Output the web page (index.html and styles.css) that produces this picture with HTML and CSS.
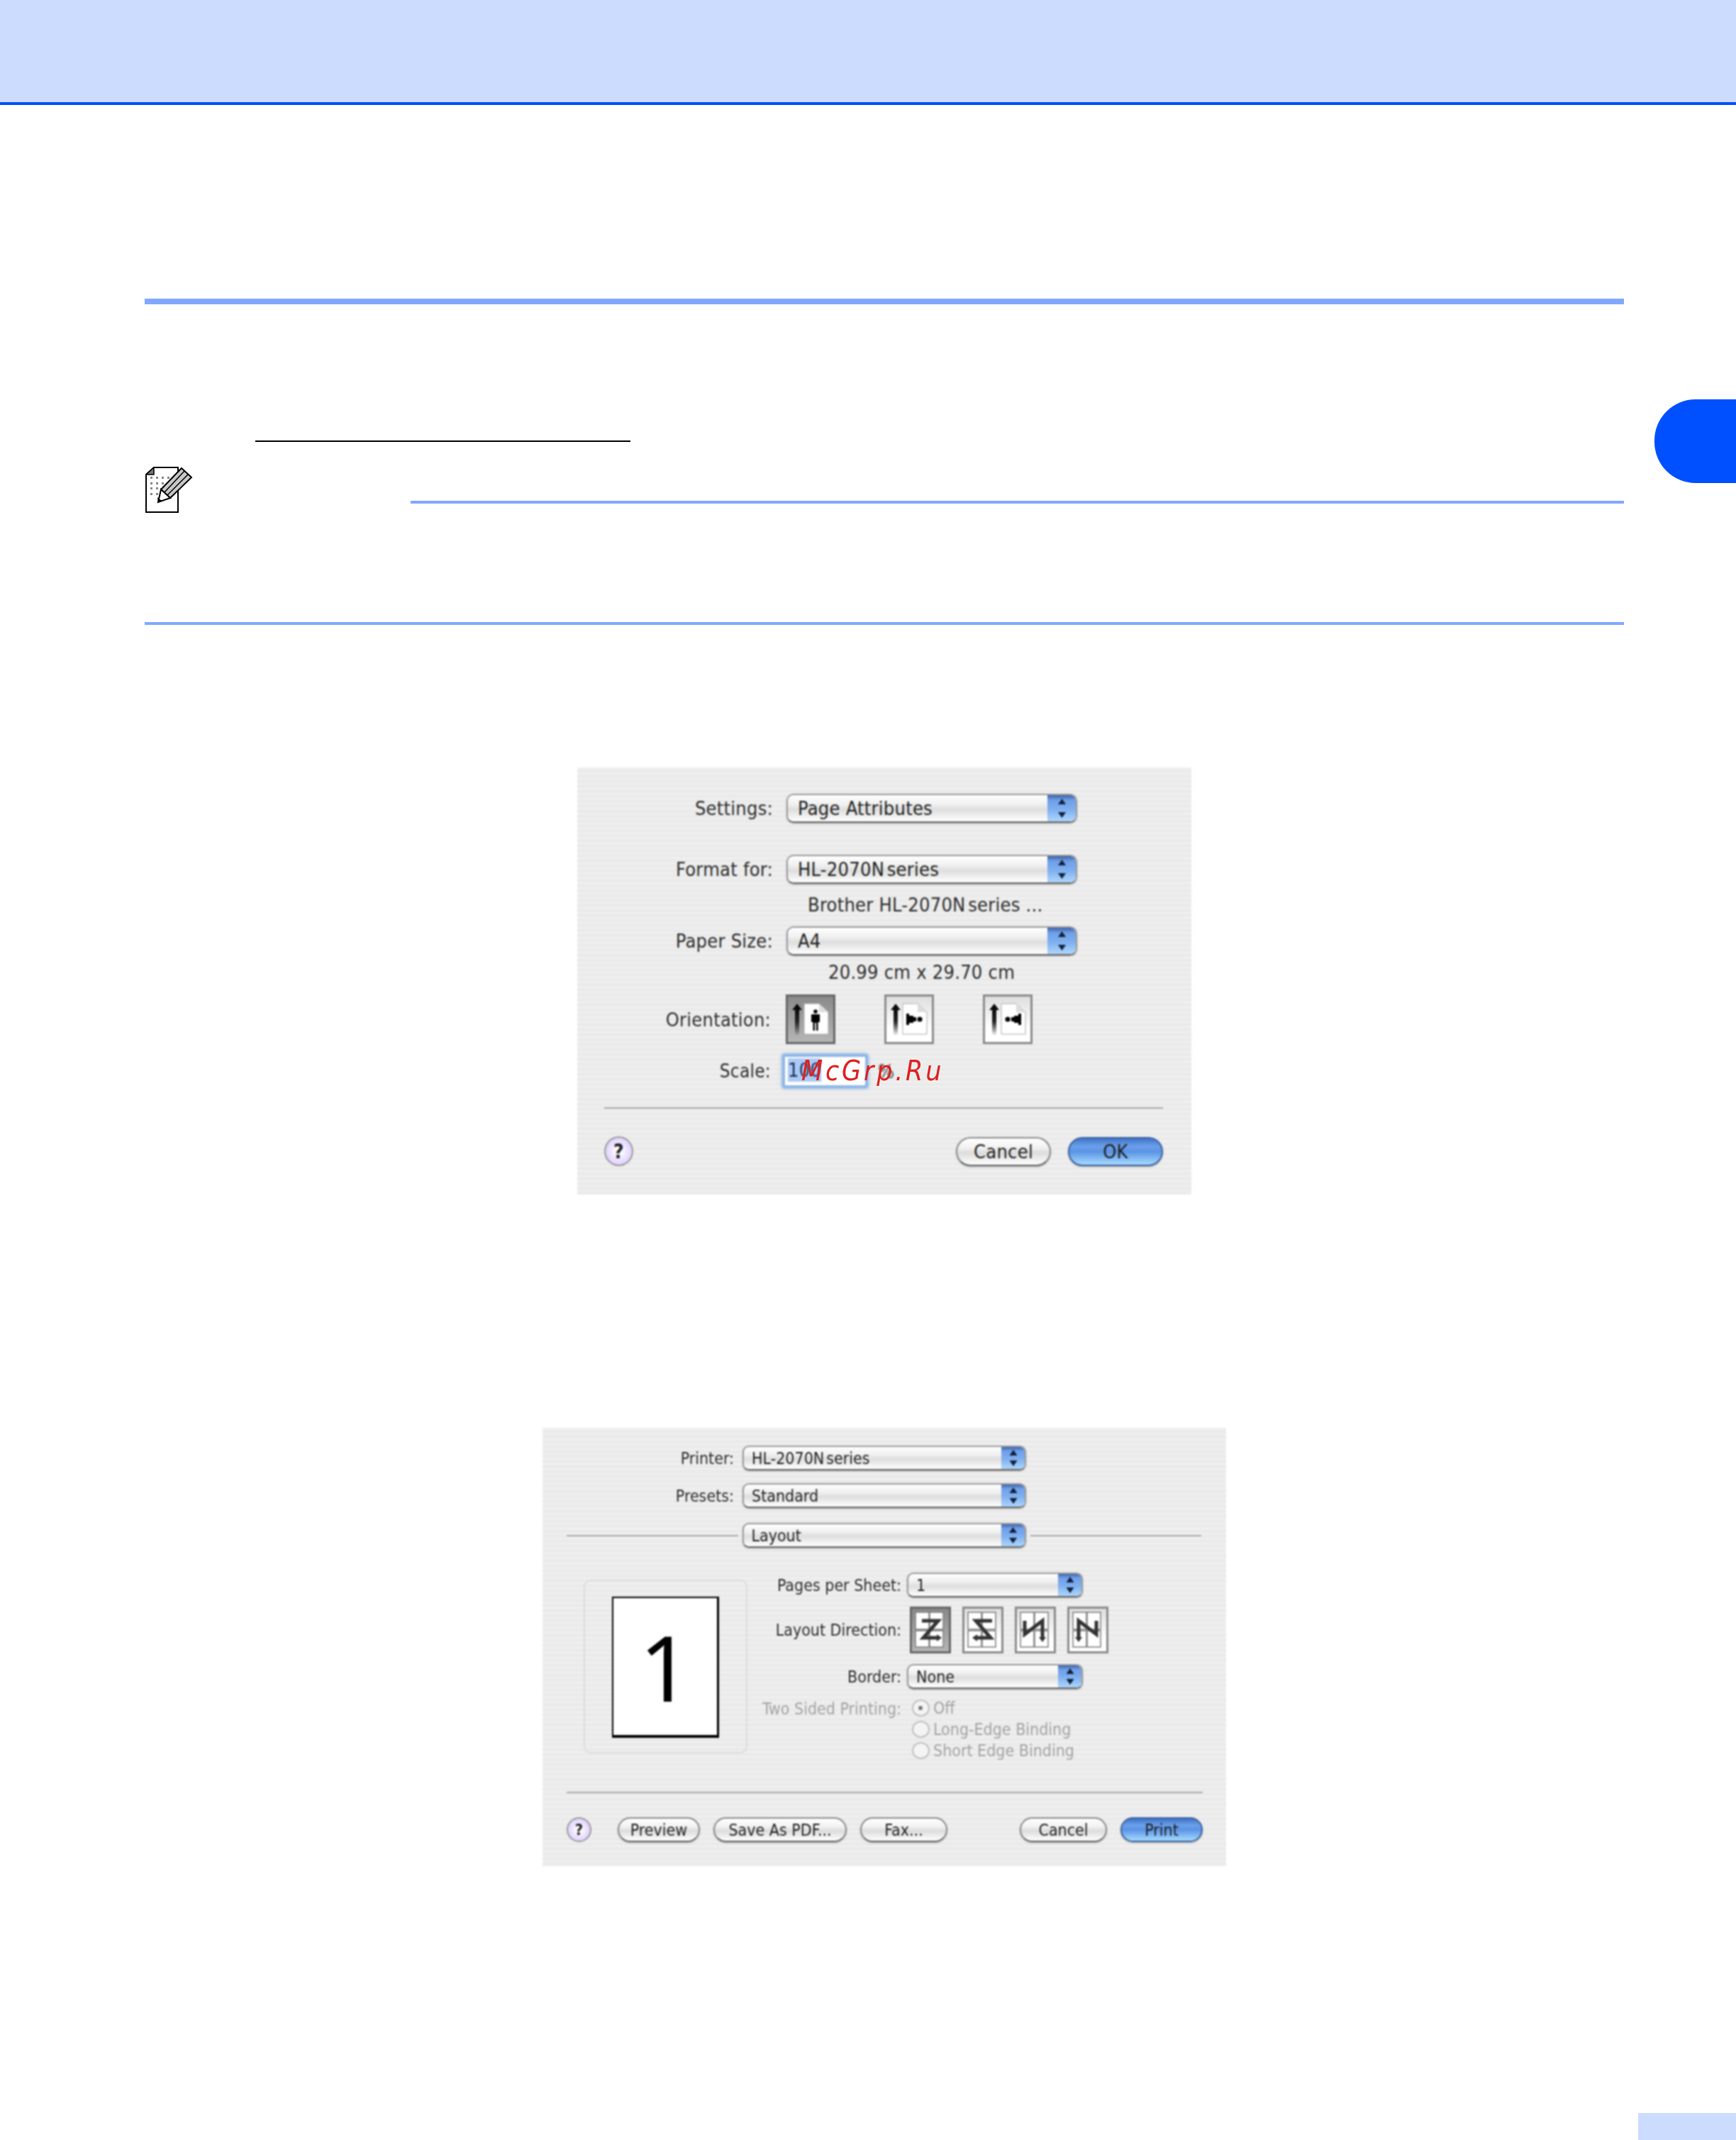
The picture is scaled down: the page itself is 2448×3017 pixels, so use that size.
FILE: index.html
```html
<!DOCTYPE html>
<html lang="en">
<head>
<meta charset="utf-8">
<title>Page Setup and Print dialogs</title>
<link rel="stylesheet" href="styles.css">
</head>
<body>
<div class="page">
  <header class="topbar"></header>
  <div class="tab"></div>
  <main class="content">
    <div class="rule"></div>
    <div class="link-line"></div>
    <div class="note">
      <svg class="note-icon" viewBox="0 0 68 66" width="68" height="66">
        <path d="M12 1H46V64H1V11Z" fill="#fff" stroke="#000" stroke-width="2"/>
        <path d="M1 11L12 1V11Z" fill="#777" stroke="#000" stroke-width="1.5"/>
        <g fill="#888">
          <rect x="7" y="14" width="3" height="3"/><rect x="15" y="14" width="3" height="3"/><rect x="23" y="14" width="3" height="3"/><rect x="31" y="14" width="3" height="3"/>
          <rect x="7" y="22" width="3" height="3"/><rect x="15" y="22" width="3" height="3"/><rect x="23" y="22" width="3" height="3"/>
          <rect x="7" y="29" width="3" height="3"/><rect x="15" y="29" width="3" height="3"/>
          <rect x="7" y="37" width="3" height="3"/><rect x="15" y="37" width="3" height="3"/>
        </g>
        <path d="M51 2L65 15L35 44L22 32Z" fill="#c8c8c8" stroke="#000" stroke-width="2"/>
        <path d="M22 32L35 44L18 50Z" fill="#fff" stroke="#000" stroke-width="2"/>
        <path d="M18 50L17 43L23 48Z" fill="#000"/>
        <path d="M55 6L27 36M60 11L31 40" stroke="#000" stroke-width="1.5" fill="none"/>
      </svg>
      <div class="note-line"></div>
    </div>
    <div class="note-end"></div>

    <section class="dialog dialog-one">
      <div class="shot">
        <div class="row row-settings"><span class="label">Settings:</span><div class="popup"><span>Page Attributes</span><i class="caps"></i></div></div>
        <div class="row row-format"><span class="label">Format for:</span><div class="popup"><span class="tight">HL-2070N series</span><i class="caps"></i></div></div>
        <div class="hint hint-printer">Brother <span class="tight">HL-2070N series</span> ...</div>
        <div class="row row-paper"><span class="label">Paper Size:</span><div class="popup"><span>A4</span><i class="caps"></i></div></div>
        <div class="hint hint-size">20.99 cm x 29.70 cm</div>
        <div class="row row-orient"><span class="label">Orientation:</span>
          <div class="orient-set">
            <div class="toggle toggle-large on">
              <svg viewBox="0 0 70 70" width="70" height="70"><use href="#arrow"/><use href="#sheet"/><g transform="translate(42 29)"><circle cx="0" cy="-5" r="2.8"/><path d="M-6 -1H6V10H3.5V22H1V11H-1V22H-3.5V10H-6Z"/></g></svg>
            </div>
            <div class="toggle toggle-large">
              <svg viewBox="0 0 70 70" width="70" height="70"><use href="#arrow"/><use href="#sheet"/><g transform="translate(31 35)"><path d="M0 -8H4V-5H10V-3H14V3H10V5H4V8H0Z"/><circle cx="19" cy="0" r="3.6"/></g></svg>
            </div>
            <div class="toggle toggle-large">
              <svg viewBox="0 0 70 70" width="70" height="70"><use href="#arrow"/><use href="#sheet"/><g transform="translate(54 35)"><path d="M0 -8H-4V-5H-10V-3H-14V3H-10V5H-4V8H0Z"/><circle cx="-19" cy="0" r="3.6"/></g></svg>
            </div>
          </div>
        </div>
        <div class="row row-scale"><span class="label">Scale:</span>
          <div class="field"><span class="selected">100</span></div><span class="percent">%</span>
        </div>
        <div class="sep sep-one"></div>
        <div class="actions actions-one">
          <div class="help help-large">?</div>
          <div class="btn btn-cancel-one">Cancel</div>
          <div class="btn primary btn-ok">OK</div>
        </div>
      </div>
      <div class="watermark">McGrp.Ru</div>
    </section>

    <section class="dialog dialog-two">
      <div class="shot">
        <div class="row2 row-printer"><span class="label2">Printer:</span><div class="popup popup-small"><span class="tight">HL-2070N series</span><i class="caps"></i></div></div>
        <div class="row2 row-presets"><span class="label2">Presets:</span><div class="popup popup-small"><span>Standard</span><i class="caps"></i></div></div>
        <div class="row-layout"><div class="sep-side"></div><div class="popup popup-small"><span>Layout</span><i class="caps"></i></div><div class="sep-side"></div></div>
        <div class="layout-main">
          <div class="preview"><div class="sheet"><span class="sheet-num">1</span></div></div>
          <div class="options">
            <div class="opt-row"><span class="opt-label">Pages per Sheet:</span><div class="popup popup-small popup-short"><span>1</span><i class="caps"></i></div></div>
            <div class="opt-row opt-direction"><span class="opt-label">Layout Direction:</span>
              <div class="dir-set">
                <div class="toggle toggle-small on"><svg viewBox="0 0 57 65" width="57" height="65"><use href="#panes"/><path class="flow" d="M16 19H39L18 43H37"/><path class="head" d="M37 38L44 43L37 48Z"/></svg></div>
                <div class="toggle toggle-small"><svg viewBox="0 0 57 65" width="57" height="65"><use href="#panes"/><path class="flow" d="M41 19H18L39 43H20"/><path class="head" d="M20 38L13 43L20 48Z"/></svg></div>
                <div class="toggle toggle-small"><svg viewBox="0 0 57 65" width="57" height="65"><use href="#panes"/><path class="flow" d="M13 19V38L38 19V43"/><path class="head" d="M33 42H43L38 49Z"/></svg></div>
                <div class="toggle toggle-small"><svg viewBox="0 0 57 65" width="57" height="65"><use href="#panes"/><path class="flow" d="M40 19V38L15 19V43"/><path class="head" d="M10 42H20L15 49Z"/></svg></div>
              </div>
            </div>
            <div class="opt-row opt-border"><span class="opt-label">Border:</span><div class="popup popup-small popup-short"><span>None</span><i class="caps"></i></div></div>
            <div class="opt-row opt-sided"><span class="opt-label muted">Two Sided Printing:</span>
              <div class="radios">
                <div class="radio-row"><i class="radio checked"></i><span>Off</span></div>
                <div class="radio-row"><i class="radio"></i><span>Long-Edge Binding</span></div>
                <div class="radio-row"><i class="radio"></i><span>Short Edge Binding</span></div>
              </div>
            </div>
          </div>
        </div>
        <div class="sep sep-two"></div>
        <div class="actions actions-two">
          <div class="help help-small">?</div>
          <div class="btn btn-small btn-preview">Preview</div>
          <div class="btn btn-small btn-pdf">Save As PDF...</div>
          <div class="btn btn-small btn-fax">Fax...</div>
          <div class="btn btn-small btn-cancel-two">Cancel</div>
          <div class="btn btn-small primary btn-print">Print</div>
        </div>
      </div>
    </section>
  </main>
  <footer class="page-foot"></footer>
</div>

<svg class="defs" width="0" height="0" aria-hidden="true">
  <defs>
    <linearGradient id="fade" x1="0" y1="0" x2="0" y2="1"><stop offset="0" stop-color="#000"/><stop offset=".55" stop-color="#222"/><stop offset="1" stop-color="#000" stop-opacity="0"/></linearGradient>
    <g id="arrow"><path d="M16 13L23 22H19V58H13V22H9Z" fill="url(#fade)"/></g>
    <g id="sheet"><path d="M26 13H47L60 25V56H26Z" fill="#fff" stroke="#aaa" stroke-width="1"/><path d="M47 13V25H60Z" fill="#ddd"/></g>
    <g id="panes" fill="#fff" stroke="#808080" stroke-width="1.6"><rect x="7" y="7" width="19" height="24"/><rect x="27" y="7" width="19" height="24"/><rect x="7" y="33" width="19" height="23"/><rect x="27" y="33" width="19" height="23"/></g>
  </defs>
</svg>
</body>
</html>
```
FILE: styles.css
```css
html, body { margin: 0; padding: 0; background: #fff; }
.page { position: relative; width: 2448px; height: 3017px; overflow: hidden; display: flex; flex-direction: column; }
.topbar { height: 144px; flex: none; background: #cbdcff; border-bottom: 4px solid #0050ff; }
.tab { position: absolute; top: 563px; left: 2333px; width: 115px; height: 118px; background: #0050ff; border-radius: 58px 0 0 58px; }
.content { width: 2086px; margin-left: 204px; flex: none; }
.rule { height: 8px; margin-top: 273px; background: #80a8ff; }
.link-line { width: 529px; height: 2px; margin: 192px 0 0 156px; background: #000; }
.note { display: flex; margin-top: 35px; height: 66px; }
.note-icon { flex: none; margin-left: 1px; }
.note-line { width: 1711px; height: 4px; margin: 48px 0 0 306px; background: #80a8ff; }
.note-end { height: 4px; margin-top: 153px; background: #80a8ff; }
.page-foot { width: 138px; height: 38px; margin: auto 0 0 auto; background: #cbdcff; }
.defs { position: absolute; }

.dialog { position: relative; margin-left: auto; margin-right: auto; font-family: "DejaVu Sans Condensed", "DejaVu Sans", sans-serif; font-stretch: condensed; color: #2c2c2c; }
.dialog-one { width: 866px; height: 602px; margin-top: 201px; font-size: 27px; letter-spacing: .25px; }
.dialog-two { width: 964px; height: 618px; margin-top: 329px; font-size: 23px; }
.shot { height: 100%; box-sizing: border-box; display: flow-root; background: repeating-linear-gradient(#eeeeee 0 4px, #e9e9e9 4px 7px); filter: blur(.8px); }
.tight { word-spacing: -.16em; }

.row { display: flex; align-items: center; }
.label { width: 276px; text-align: right; flex: none; margin-right: 19px; }
.row .popup { width: 410px; height: 41px; }
.row-settings { margin-top: 37px; }
.row-format { margin-top: 45px; }
.row-paper { margin-top: 15px; }
.hint { height: 30px; line-height: 30px; }
.hint-printer { margin: 15px 0 0 325px; }
.hint-size { margin: 9px 0 0 354px; }
.row-orient { margin-top: 16px; }
.row-orient .label { margin-right: 18px; position: relative; left: -3px; }
.orient-set { display: flex; gap: 69px; }
.row-scale { margin-top: 14px; height: 48px; }
.row-scale .label { margin-right: 13px; position: relative; left: -3px; font-size: 26px; }

.popup { position: relative; box-sizing: border-box; display: flex; align-items: center; padding-left: 14px; border: 2px solid #9a9a9a; border-bottom-color: #666; border-radius: 10px; background: linear-gradient(#ffffff, #f0f0f0 35%, #dedede 55%, #ffffff); box-shadow: 0 1px 2px rgba(0,0,0,.35); color: #1e1e1e; overflow: hidden; }
.caps { position: absolute; top: -2px; bottom: -2px; right: -2px; width: 42px; background: linear-gradient(#2e4f93, #6f9fe8 22%, #7fb0f0 55%, #b4dcff); }
.caps::before, .caps::after { content: ""; position: absolute; left: 50%; width: 11px; height: 8px; margin-left: -6px; background: #10203c; }
.caps::before { top: 17%; clip-path: polygon(50% 0, 100% 100%, 0 100%); }
.caps::after { bottom: 17%; clip-path: polygon(0 0, 100% 0, 50% 100%); }

.toggle { box-sizing: border-box; border: 3px solid #8a8a8a; background: linear-gradient(#dedede, #ffffff 70%); display: flex; align-items: center; justify-content: center; overflow: hidden; }
.toggle.on { background: linear-gradient(#8a8a8a, #b5b5b5); border-color: #666; }
.toggle svg { flex: none; }
.toggle-large { width: 70px; height: 70px; }
.toggle-small { width: 58px; height: 66px; }

.field { position: relative; box-sizing: border-box; width: 121px; height: 48px; padding: 2px 0 0 4px; border: 4px solid #8fb7e8; border-radius: 3px; background: #fff; box-shadow: 0 0 5px #6fa0dc; flex: none; color: #1b2a55; line-height: 33px; }
.selected { display: block; width: 47px; height: 33px; background: #acc9f5; overflow: visible; }
.percent { margin-left: 14px; color: #555; }
.watermark { position: absolute; left: 316px; top: 405px; font-family: "DejaVu Sans", sans-serif; font-style: italic; font-size: 39px; line-height: 46px; letter-spacing: 3.75px; color: #dd2020; }

.sep { height: 2px; background: #a8a8a8; }
.sep-one { margin: 27px 40px 0 38px; }
.sep-two { margin: 46px 33px 0 34px; }
.actions { display: flex; align-items: center; }
.actions-one { margin: 39px 40px 0 38px; gap: 24px; }
.actions-two { margin: 34px 33px 0 34px; gap: 19px; }
.help { box-sizing: border-box; display: flex; align-items: center; justify-content: center; border: 2px solid #999; border-radius: 50%; background: radial-gradient(#ffffff 10%, #d9c6ff 85%); font-weight: bold; color: #222; }
.help-large { width: 41px; height: 42px; margin-right: auto; font-size: 28px; }
.help-small { width: 35px; height: 35px; margin-right: 18px; font-size: 22px; }
.btn { box-sizing: border-box; display: flex; align-items: center; justify-content: center; height: 41px; border: 2px solid #8a8a8a; border-bottom-color: #666; border-radius: 21px; background: linear-gradient(#ffffff, #f2f2f2 35%, #dcdcdc 55%, #ffffff); box-shadow: 0 1px 2px rgba(0,0,0,.35); color: #1e1e1e; }
.btn.primary { border-color: #3a5f9f; background: linear-gradient(#3f74c8, #6ba0ea 30%, #5b93e6 50%, #a6dcff); }
.btn-cancel-one, .btn-ok { width: 134px; }
.btn-small { height: 35px; border-radius: 18px; }
.btn-preview { width: 116px; }
.btn-pdf { width: 188px; }
.btn-fax { width: 123px; margin-right: 83px; }
.btn-cancel-two { width: 123px; }
.btn-print { width: 116px; }

.row2 { display: flex; align-items: center; }
.label2 { width: 270px; margin-right: 12px; text-align: right; flex: none; }
.popup-small { width: 400px; height: 35px; padding-left: 11px; border-radius: 9px; }
.popup-small .caps { width: 35px; }
.row-printer { margin-top: 25px; }
.row-presets { margin-top: 18px; }
.row-layout { display: flex; align-items: center; margin: 21px 35px 0 34px; }
.sep-side { flex: 1; height: 2px; background: #a8a8a8; }
.row-layout .popup { margin: 0 6px; }

.layout-main { display: flex; align-items: flex-start; margin: 35px 0 0 58px; }
.preview { box-sizing: border-box; width: 231px; height: 245px; margin-top: 10px; border: 2px solid #dcdcdc; border-radius: 10px; display: flex; justify-content: center; padding-top: 22px; flex: none; }
.sheet { box-sizing: border-box; width: 151px; height: 199px; border: 2px solid #000; border-bottom-width: 4px; border-right-width: 3px; background: #fff; display: flex; align-items: center; justify-content: center; }
.sheet-num { font-family: "Noto Sans", sans-serif; font-size: 128px; line-height: 1; color: #000; }
.options { margin-left: 14px; }
.opt-row { display: flex; align-items: center; }
.opt-label { width: 203px; margin-right: 8px; text-align: right; flex: none; }
.popup-short { width: 248px; }
.opt-direction { margin-top: 13px; }
.opt-label + .dir-set { margin-left: 4px; }
.dir-set { display: flex; gap: 16px; }
.opt-border { margin-top: 15px; }
.opt-sided { margin-top: 15px; align-items: flex-start; }
.muted { color: #a2a2a2; white-space: nowrap; }
.radios { margin-left: 7px; color: #a2a2a2; }
.radio-row { display: flex; align-items: center; height: 24px; margin-bottom: 6px; gap: 5px; white-space: nowrap; }
.radio-row:last-child { margin-bottom: 0; }
.radio { position: relative; box-sizing: border-box; width: 25px; height: 24px; border: 2px solid #c0c0c0; border-radius: 50%; background: #f4f4f4; flex: none; }
.radio.checked::after { content: ""; position: absolute; left: 7px; top: 7px; width: 6px; height: 6px; border-radius: 50%; background: #777; }
.flow { fill: none; stroke: #333; stroke-width: 5; }
.head { fill: #333; }
```
